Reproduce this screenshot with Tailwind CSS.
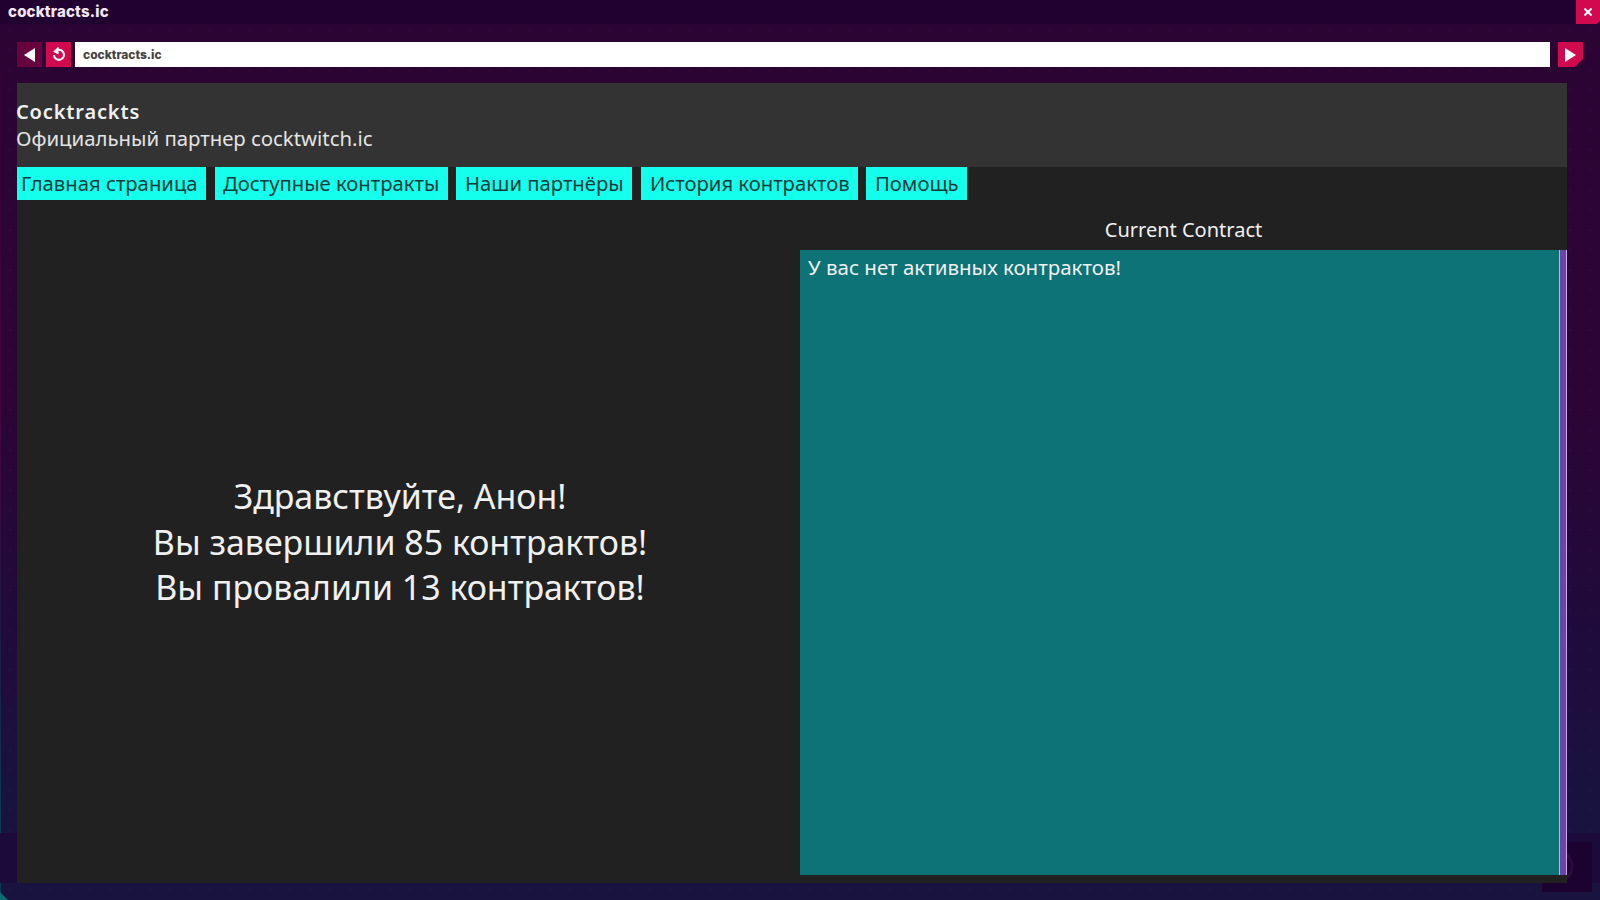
<!DOCTYPE html>
<html lang="ru">
<head>
    <meta charset="UTF-8">
    <title>cocktracts.ic</title>
    <script src="https://cdn.jsdelivr.net/npm/@tailwindcss/browser@4"></script>
</head>
<body class="relative w-[1600px] h-[900px] overflow-hidden flex flex-col bg-[linear-gradient(180deg,#2b0433_0%,#2c0436_45%,#1e0c3c_72%,#19133f_90%,#19133f_100%)] font-['Noto_Sans','Open_Sans',sans-serif] text-[#f0f0f0]">

    <!-- dots -->
    <div class="absolute inset-0 bg-[radial-gradient(circle,rgba(90,30,120,0.18)_1px,transparent_1.5px)] bg-[size:20px_20px]"></div>
    <!-- left edge -->
    <div class="absolute left-0 top-0 w-[1px] h-full bg-[linear-gradient(180deg,#2b0433_0%,#4a0040_45%,#1d1a48_70%,#0b3a55_92%)]"></div>
    <!-- bottom band + watermark -->
    <div class="absolute left-0 top-[833px] w-full h-[50px] bg-[#1c0b3a]"></div>
    <div class="absolute left-[1542px] top-[842px] w-[50px] h-[50px] bg-[#1c0230] flex items-center justify-center">
        <svg width="50" height="50" viewBox="0 0 50 50" fill="none" stroke="#2a0c3c" stroke-width="3"><path d="M18 9a16 16 0 0 1 0 31"/></svg>
    </div>
    <div class="absolute left-0 bottom-0 w-[8px] h-[8px] bg-[#0d6b72] [clip-path:polygon(0_0,100%_100%,0_100%)]"></div>

    <!-- title bar -->
    <div class="relative flex items-center justify-between h-[24px] bg-[#21012f]">
        <span class="pl-[8px] pt-[1px] [font-family:Inter,sans-serif] font-extrabold text-[15px] tracking-[0.2px] text-[#f3e6f5]">cocktracts.ic</span>
        <div class="flex items-center justify-center w-[24px] h-[24px] bg-[#d10a50] [clip-path:polygon(0_0,100%_0,100%_calc(100%-3px),calc(100%-3px)_100%,0_100%)]">
            <svg width="8" height="8" viewBox="0 0 8 8" stroke="#fff" stroke-width="2"><path d="M0.5 0.5 7.5 7.5M7.5 0.5 0.5 7.5"/></svg>
        </div>
    </div>

    <!-- address bar -->
    <div class="relative flex items-center mt-[18px] pl-[17px] h-[25px]">
        <div class="flex items-center justify-center w-[25px] h-[25px] bg-[#67033f]">
            <svg width="11" height="14" viewBox="0 0 11 14" fill="#fff"><path d="M11 0V14L0 7Z"/></svg>
        </div>
        <div class="flex items-center justify-center w-[25px] h-[25px] ml-[4px] bg-[#d10a50]">
            <svg width="14" height="15" viewBox="0 0 14 15" fill="none" stroke="#fff" stroke-width="2"><path d="M3.2 4.6A5 5 0 1 1 2 8"/><path d="M6.5 0.5 2.5 4.5 6.5 6.5" stroke-width="1.5" fill="#fff"/></svg>
        </div>
        <div class="flex items-center w-[1475px] h-[25px] ml-[4px] pl-[8px] bg-white [font-family:Inter,sans-serif] font-extrabold text-[12px] text-[#444]">cocktracts.ic</div>
        <div class="flex items-center justify-center w-[25px] h-[25px] ml-[8px] bg-[#d10a50] [clip-path:polygon(0_0,100%_0,100%_calc(100%-8px),calc(100%-8px)_100%,0_100%)]">
            <svg width="11" height="14" viewBox="0 0 11 14" fill="#fff"><path d="M0 0V14L11 7Z"/></svg>
        </div>
    </div>

    <!-- window content -->
    <div class="relative flex flex-col w-[1550px] h-[800px] mt-[16px] ml-[17px] bg-[#212121]">
        <header class="h-[84px] pt-[15px] bg-[#333333] leading-[27px]">
            <div class="text-[20px] font-semibold tracking-[0.85px] -ml-[1px]">Cocktrackts</div>
            <div class="text-[20.35px] text-[#e4e4e4] -ml-[1px]">Официальный партнер cocktwitch.ic</div>
        </header>

        <nav class="flex h-[33px] text-[20.25px] leading-[33px] text-[#123c3c]">
            <a class="w-[189px] pl-[4px] bg-[#14ffec]">Главная страница</a>
            <a class="w-[233px] ml-[9px] pl-[8px] bg-[#14ffec]">Доступные контракты</a>
            <a class="w-[176px] ml-[8px] pl-[9px] bg-[#14ffec]">Наши партнёры</a>
            <a class="w-[217px] ml-[9px] pl-[9px] bg-[#14ffec]">История контрактов</a>
            <a class="w-[101px] ml-[8px] pl-[9px] bg-[#14ffec]">Помощь</a>
        </nav>

        <div class="flex flex-1 min-h-0">
            <div class="flex w-[766px] mr-[17px] pt-[2px] items-center justify-center text-center text-[33.9px] leading-[45.5px]">
                <p>Здравствуйте, Анон!<br>Вы завершили 85 контрактов!<br>Вы провалили 13 контрактов!</p>
            </div>
            <div class="flex flex-col w-[767px] pb-[8px]">
                <h2 class="h-[50px] pt-[13px] text-center text-[20px] leading-[34px] font-normal">Current Contract</h2>
                <div class="flex flex-1">
                    <div class="flex-1 pl-[8px] pt-[1px] bg-[#0d7377] text-[20.5px] leading-[32px]">У вас нет активных контрактов!</div>
                    <div class="w-[8px] bg-[#6a45a8] border-x border-[#c9a8ea]"></div>
                </div>
            </div>
        </div>
    </div>
</body>
</html>
